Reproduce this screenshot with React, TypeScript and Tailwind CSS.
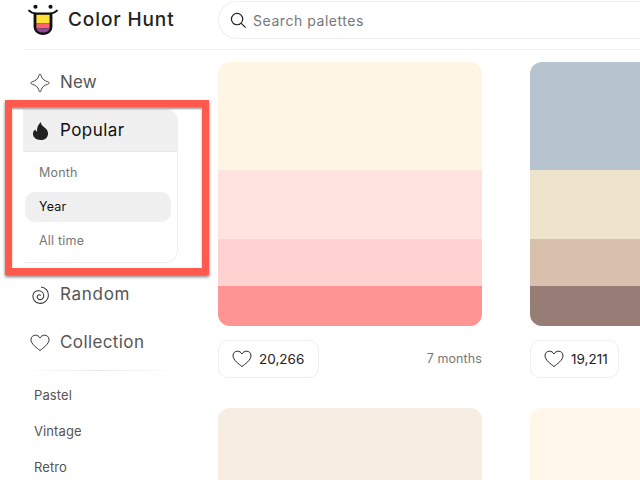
import React from "react";

const font = { fontFamily: '"Inter", "Noto Sans", sans-serif' };

function Heart({ className = "" }: { className?: string }) {
  return (
    <svg viewBox="0 0 20 18" className={className} fill="none" stroke="currentColor" strokeWidth="1">
      <path d="M10 16.6 C7 14 1 10.2 1 5.6 C1 3 3 1.2 5.4 1.2 C7.4 1.2 9 2.2 10 4 C11 2.2 12.6 1.2 14.6 1.2 C17 1.2 19 3 19 5.6 C19 10.2 13 14 10 16.6 Z" />
    </svg>
  );
}

function Logo() {
  return (
    <svg viewBox="0 0 34 36" className="w-[32px] h-[36px]">
      <circle cx="9" cy="5" r="2.2" fill="#111" />
      <circle cx="25" cy="5" r="2.2" fill="#111" />
      <path d="M1.5 8.5 C4 11 7 12 10 12 L24 12 C27 12 30 11 32.5 8.5" fill="none" stroke="#111" strokeWidth="2" />
      <path d="M7 12 L27 12 L27 26 C27 31 23 35 17 35 C11 35 7 31 7 26 Z" fill="#111" />
      <path d="M10 13.5 H24 V22.5 H10 Z" fill="#ffe135" />
      <path d="M10 22.5 H24 V28 H10 Z" fill="#f9636b" />
      <path d="M10 28 H24 C23.5 30.5 21 32.4 17 32.4 C13 32.4 10.5 30.5 10 28 Z" fill="#8e4b9e" />
    </svg>
  );
}

function NavItem({ icon, label, tracking }: { icon: React.ReactNode; label: string; tracking: string }) {
  return (
    <div className={`h-[48px] flex items-center pl-[7px] text-[17px] text-[#555] ${tracking}`}>
      <span className="w-[20px] h-[22px] flex items-center justify-center mr-[10px] text-[#333]">{icon}</span>
      {label}
    </div>
  );
}

function Palette({ colors, likes, time, btn }: { colors: [string, number][]; likes: string; time?: string; btn: string }) {
  return (
    <div className="w-[264px] shrink-0">
      <div className="h-[264px] rounded-[12px] overflow-hidden flex flex-col">
        {colors.map(([c, h]) => (
          <div key={c} style={{ backgroundColor: c, height: h }} />
        ))}
      </div>
      <div className="mt-[14px] flex items-center justify-between">
        <div className={`${btn} h-[38px] border border-[#eeeeee] rounded-[10px] flex items-center pl-[13px] text-[13.5px] text-[#222]`}>
          <Heart className="w-[20px] h-[18px] text-[#222] mr-[7px]" />
          {likes}
        </div>
        {time && <span className="text-[12.5px] text-[#777] tracking-[0.1px]">{time}</span>}
      </div>
    </div>
  );
}

export default function App() {
  return (
    <div className="relative w-[640px] h-[480px] overflow-hidden bg-white" style={font}>
      <header className="ml-[23px] h-[50px] border-b border-[#f1f1f1] flex items-start">
        <div className="w-[195px] h-[38px] flex items-center shrink-0 pl-[4px]">
          <Logo />
          <span className="ml-[9px] pt-[3px] text-[19px] font-medium text-[#222] tracking-[0.9px]">Color Hunt</span>
        </div>
        <div className="mt-[1px] flex-1 h-[38px] border border-[#eeeeee] border-r-0 rounded-l-[19px] flex items-center pl-[11px]">
          <svg viewBox="0 0 18 18" className="w-[17px] h-[17px] mr-[6px] text-[#222]" fill="none" stroke="currentColor" strokeWidth="1.3">
            <circle cx="7.5" cy="7.5" r="6" />
            <path d="M12 12 L16.5 16.5" />
          </svg>
          <span className="text-[14px] text-[#777] tracking-[0.55px]">Search palettes</span>
        </div>
      </header>

      <div className="flex">
        <aside className="ml-[23px] w-[155px] mr-[40px] shrink-0 pt-[9px]">
          <NavItem
            label="New"
            tracking="tracking-[0.2px]"
            icon={
              <svg viewBox="0 0 22 22" className="w-[22px] h-[22px]" fill="none" stroke="currentColor" strokeWidth="1">
                <path d="M11 1.2 C11.6 1.2 11.9 1.8 12.2 3 C13 6 15.5 8.6 19.5 9.6 C20.6 9.9 21 10.4 21 11 C21 11.6 20.6 12.1 19.5 12.4 C15.5 13.4 13 16 12.2 19 C11.9 20.2 11.6 20.8 11 20.8 C10.4 20.8 10.1 20.2 9.8 19 C9 16 6.5 13.4 2.5 12.4 C1.4 12.1 1 11.6 1 11 C1 10.4 1.4 9.9 2.5 9.6 C6.5 8.6 9 6 9.8 3 C10.1 1.8 10.4 1.2 11 1.2 Z" strokeLinejoin="round" />
              </svg>
            }
          />
          <div className="mt-[2px] border border-l-0 border-[#eeeeee] rounded-r-[12px] overflow-hidden">
            <div className="h-[42px] bg-[#f0f0f0] border-b border-[#e8e8e8] flex items-center pl-[7px] text-[17px] text-[#111] tracking-[0.45px]">
              <span className="w-[20px] h-[22px] flex items-center justify-center mr-[10px]">
                <svg viewBox="0 0 18 20" className="w-[17px] h-[20px]" fill="#222">
                  <path d="M9.5 0.5 C9.3 2.6 10.4 4.2 12.6 5.8 C15.6 8 17 10 17 12.8 C17 16.8 13.5 19.6 9 19.6 C4.5 19.6 1 16.8 1 13 C1 10.8 2 9.2 3.6 8.4 C3.8 9.6 4.5 10.4 5.4 10.6 C5 6.6 6.4 2.8 9.5 0.5 Z" />
                </svg>
              </span>
              Popular
            </div>
            <div className="pl-[2px] pr-[6px] pt-[4px] pb-[4px] text-[12.5px] text-[#777] tracking-[0.2px]">
              <div className="h-[34px] flex items-center pl-[14px]">Month</div>
              <div className="h-[30px] my-[2px] flex items-center pl-[14px] bg-[#f0f0f0] rounded-[10px] w-[146px] text-[#111]">Year</div>
              <div className="h-[34px] flex items-center pl-[14px]">All time</div>
            </div>
          </div>
          <div className="mt-[8px]">
            <NavItem
              label="Random"
              tracking="tracking-[0.7px]"
              icon={
                <svg viewBox="0 0 20 20" className="w-[19px] h-[19px]" fill="none" stroke="currentColor" strokeWidth="1.1">
                  <path d="M10.5 1 C15.5 1.5 18.8 5.5 18.3 10.5 C17.8 15.5 13.5 18.8 8.5 18.2 C4.5 17.7 1.5 14 2 10 C2.5 6.5 5.5 4.5 8.7 5 C11.8 5.5 13.8 8 13.4 11 C13 13.5 10.5 14.8 8.5 14.2 C6.7 13.6 6 11.5 7 10 C7.8 8.9 9.5 8.9 10.2 10" />
                </svg>
              }
            />
            <NavItem label="Collection" tracking="tracking-[0.4px]" icon={<Heart className="w-[20px] h-[18px]" />} />
          </div>
          <div className="mt-[3px] h-px w-[155px] bg-gradient-to-r from-transparent via-[#e8e8e8] to-transparent" />
          <div className="text-[13px] text-[#555] pl-[11px] pt-[7px] tracking-[0.1px]">
            <div className="h-[36px] flex items-center">Pastel</div>
            <div className="h-[36px] flex items-center">Vintage</div>
            <div className="h-[36px] flex items-center">Retro</div>
          </div>
        </aside>

        <main className="pt-[12px] flex-1 min-w-0">
          <div className="flex gap-[48px]">
            <Palette
              btn="w-[101px]"
              likes="20,266"
              time="7 months"
              colors={[["#FFF5E4", 108], ["#FFE3E1", 69], ["#FFD1D1", 47], ["#FF9494", 40]]}
            />
            <Palette
              btn="w-[89px]"
              likes="19,211"
              colors={[["#B7C4CF", 108], ["#EEE3CB", 69], ["#D7C0AE", 47], ["#967E76", 40]]}
            />
          </div>
          <div className="flex gap-[48px] mt-[30px]">
            <div className="w-[264px] h-[264px] shrink-0 rounded-[12px] bg-[#F7EDE2]" />
            <div className="w-[264px] h-[264px] shrink-0 rounded-[12px] bg-[#FFF7E9]" />
          </div>
        </main>
      </div>

      <div className="absolute left-[5px] top-[100px] w-[204px] h-[175px] border-[7px] border-[#ff5a4d] shadow-[0_2px_3px_rgba(0,0,0,0.5),inset_0_2px_2px_rgba(0,0,0,0.4)]" />
    </div>
  );
}
